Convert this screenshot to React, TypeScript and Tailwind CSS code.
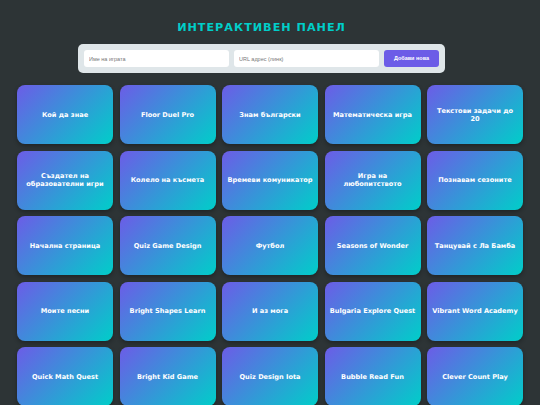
const games = [
  "Кой да знае",
  "Floor Duel Pro",
  "Знам български",
  "Математическа игра",
  "Текстови задачи до\n20",
  "Създател на образователни игри",
  "Колело на късмета",
  "Времеви комуникатор",
  "Игра на любопитството",
  "Познавам сезоните",
  "Начална страница",
  "Quiz Game Design",
  "Футбол",
  "Seasons of Wonder",
  "Танцувай с Ла Бамба",
  "Моите песни",
  "Bright Shapes Learn",
  "И аз мога",
  "Bulgaria Explore Quest",
  "Vibrant Word Academy",
  "Quick Math Quest",
  "Bright Kid Game",
  "Quiz Design Iota",
  "Bubble Read Fun",
  "Clever Count Play",
];

// ─── Card ─────────────────────────────────────────────────────────────────────

function GameCard({ title }: { title: string }) {
  return (
    <a
      href="#"
      className="flex h-[59px] items-center justify-center whitespace-pre-line rounded-[8px] bg-[linear-gradient(135deg,#6c5ce7,#00cec9)] px-[4px] text-center text-[6.6px] font-bold leading-[8px] text-white shadow-[0_2px_4px_rgba(0,0,0,0.3)]"
    >
      {title}
    </a>
  );
}

// ─── Page ─────────────────────────────────────────────────────────────────────

export default function App() {
  return (
    <div className="min-h-[405px] bg-[#2d3436] px-[17px] pt-[20px] font-['DejaVu_Sans',sans-serif]">
      <div className="pr-[17px]">
        <h1 className="text-center text-[11.2px] font-bold leading-[16px] tracking-[1px] text-[#00cec9]">
          ИНТЕРАКТИВЕН ПАНЕЛ
        </h1>

        {/* Add form */}
        <div className="mx-auto mt-[8px] flex w-[367px] gap-[5px] rounded-[5px] bg-[#dfe6e9] p-[6px] font-['Liberation_Sans',Arial,sans-serif]">
          <input
            placeholder="Име на играта"
            className="h-[17px] w-[145px] rounded-[3px] bg-white px-[5px] text-[5.5px] text-[#333] outline-none placeholder:text-[#777]"
          />
          <input
            placeholder="URL адрес (линк)"
            className="h-[17px] w-[145px] rounded-[3px] bg-white px-[5px] text-[5.5px] text-[#333] outline-none placeholder:text-[#777]"
          />
          <button className="h-[17px] flex-1 rounded-[3px] bg-[#6c5ce7] text-[5.5px] font-bold text-white">
            Добави нова
          </button>
        </div>
      </div>

      {/* Games grid */}
      <div className="mt-[12px] grid grid-cols-5 gap-[6.5px]">
        {games.map((g) => (
          <GameCard key={g} title={g} />
        ))}
      </div>
    </div>
  );
}
